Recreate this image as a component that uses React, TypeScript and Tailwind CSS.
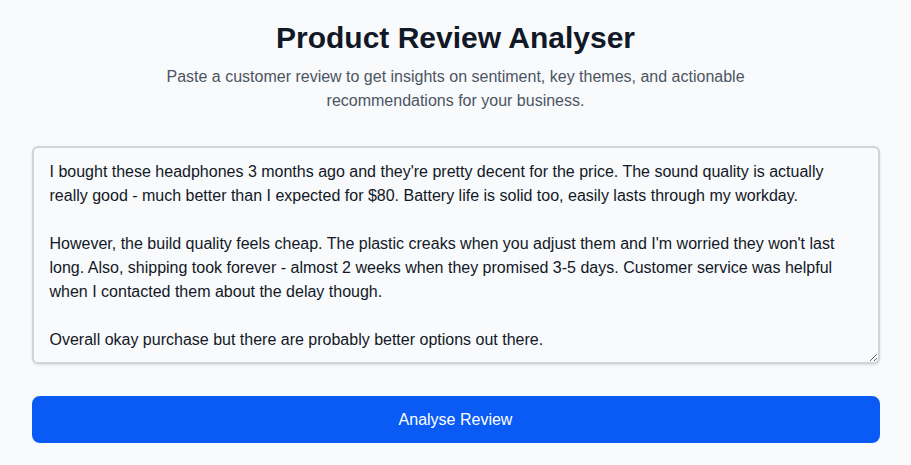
import React from "react";

const review = `I bought these headphones 3 months ago and they're pretty decent for the price. The sound quality is actually really good - much better than I expected for $80. Battery life is solid too, easily lasts through my workday.

However, the build quality feels cheap. The plastic creaks when you adjust them and I'm worried they won't last long. Also, shipping took forever - almost 2 weeks when they promised 3-5 days. Customer service was helpful when I contacted them about the delay though.

Overall okay purchase but there are probably better options out there.`;

export default function App() {
  return (
    <div className="min-h-screen bg-[#f9fafb] font-['Liberation_Sans',Arial,sans-serif]">
      <div className="max-w-4xl mx-auto px-6 pt-5">
        <h1 className="text-center text-[30px] leading-9 font-bold text-[#111827]">
          Product Review Analyser
        </h1>
        <p className="mt-[9px] text-center text-base leading-6 text-[#4b5563] max-w-2xl mx-auto">
          Paste a customer review to get insights on sentiment, key themes, and actionable recommendations for your business.
        </p>
        <textarea
          defaultValue={review}
          className="mt-[33px] block w-full h-[218px] px-4 pt-3 pb-2.5 text-base leading-6 text-[#111827] bg-[#f9fafb] border-2 border-[#d1d5db] rounded-md shadow-sm outline-none font-['Liberation_Sans',Arial,sans-serif]"
        />
        <button className="mt-8 block w-full h-[47px] rounded-lg bg-[#0a5bf5] text-white text-base">
          Analyse Review
        </button>
      </div>
    </div>
  );
}
